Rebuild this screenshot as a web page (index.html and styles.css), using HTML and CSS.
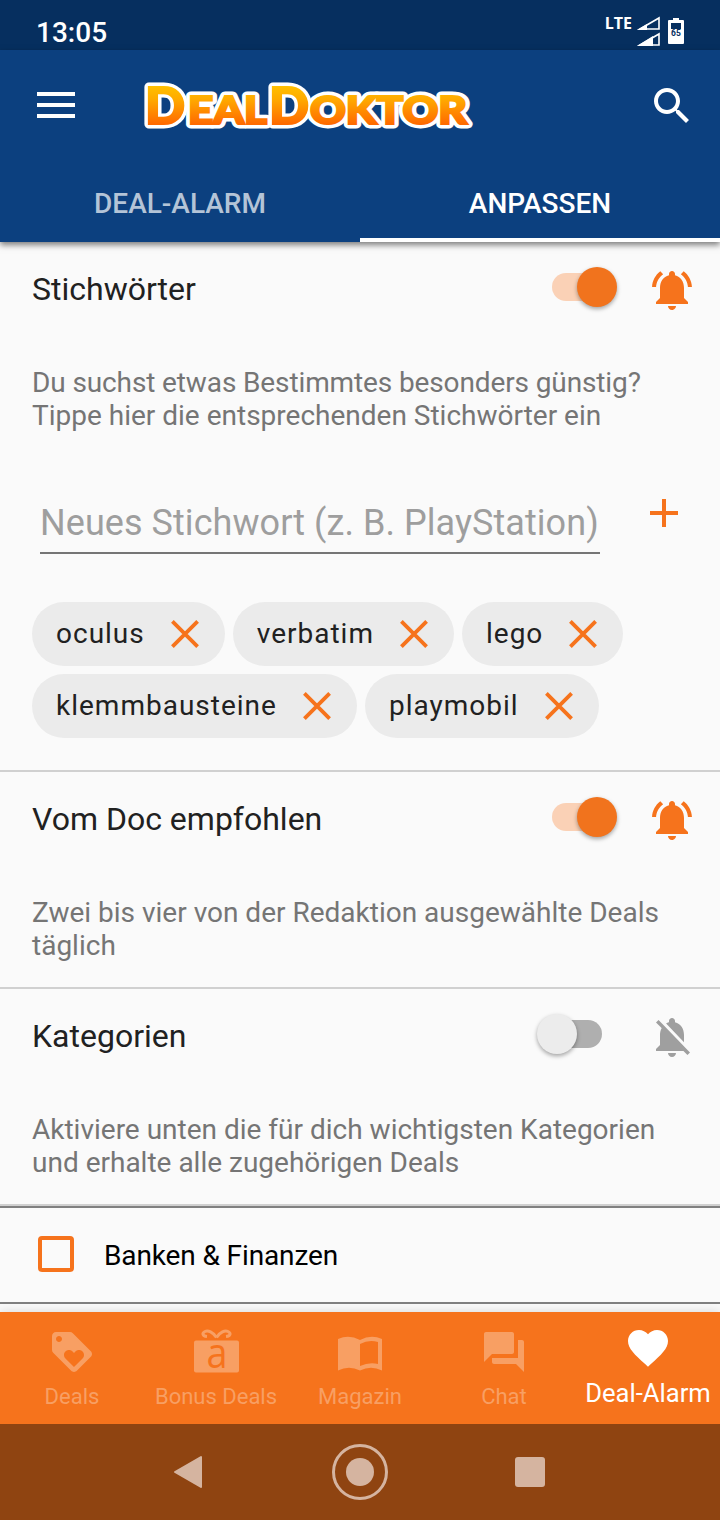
FILE: index.html
```html
<!DOCTYPE html>
<html lang="de">
<head>
    <meta charset="UTF-8">
    <meta name="viewport" content="width=device-width, initial-scale=1.0">
    <title>DealDoktor</title>
    <link rel="stylesheet" href="styles.css">
</head>
<body>
    <!-- shared icons -->
    <svg class="sprite" width="0" height="0">
        <symbol id="bell" viewBox="0 0 24 24"><path d="M7.58 4.08L6.15 2.65C3.75 4.48 2.17 7.3 2.03 10.5h2c.15-2.65 1.51-4.97 3.55-6.42zm12.39 6.42h2c-.15-3.2-1.73-6.02-4.12-7.85l-1.42 1.43c2.02 1.45 3.39 3.77 3.54 6.42zM18 11c0-3.07-1.64-5.64-4.5-6.32V4c0-.83-.67-1.5-1.5-1.5s-1.5.67-1.5 1.5v.68C7.63 5.36 6 7.92 6 11v5l-2 2v1h16v-1l-2-2v-5zm-6 11c.14 0 .27-.01.4-.04.65-.14 1.18-.58 1.44-1.18.1-.24.15-.5.15-.78h-4c.01 1.1.9 2 2.01 2z"/></symbol>
        <symbol id="close" viewBox="0 0 28 28"><path d="M1.4 1.4l25.2 25.2M26.6 1.4L1.4 26.6" fill="none" stroke="currentColor" stroke-width="3.8"/></symbol>
    </svg>

    <div class="status-bar">
        <span class="time">13:05</span>
        <div class="status-icons">
            <span class="lte">LTE</span>
            <svg class="signal" width="24" height="30" viewBox="0 0 24 30">
                <path d="M4 13L23 2V13Z" fill="none" stroke="#fff" stroke-width="1.6"/>
                <path d="M1 14L11 8V14Z"/>
                <path d="M4 29L23 18V29Z" fill="none" stroke="#fff" stroke-width="1.6"/>
                <path d="M1 30L17 20V30Z"/>
            </svg>
            <svg class="battery" width="16" height="26" viewBox="0 0 16 26">
                <path d="M5 0h6v2h4q1 0 1 1v22q0 1-1 1H1q-1 0-1-1V3q0-1 1-1h4z"/>
                <path d="M3 5h10v6H3z" fill="#062f5f"/>
                <text x="8" y="18" text-anchor="middle">65</text>
            </svg>
        </div>
    </div>

    <header>
        <div class="toolbar">
            <svg class="menu" width="38" height="26" viewBox="0 0 38 26"><path d="M0 0h38v4H0zM0 11h38v4H0zM0 22h38v4H0z"/></svg>
            <svg class="logo" width="336" height="56" viewBox="0 0 336 56">
                <defs>
                    <linearGradient id="gold" gradientUnits="userSpaceOnUse" x1="0" y1="8" x2="0" y2="46">
                        <stop offset="0" stop-color="#ffc000"/>
                        <stop offset="0.35" stop-color="#ffaa00"/>
                        <stop offset="1" stop-color="#ff6a00"/>
                    </linearGradient>
                    <text id="logo-text" y="45.5"><tspan class="big" x="4" textLength="40" lengthAdjust="spacingAndGlyphs">D</tspan><tspan class="small" x="47" textLength="79" lengthAdjust="spacingAndGlyphs">EAL</tspan><tspan class="big" x="128" textLength="40" lengthAdjust="spacingAndGlyphs">D</tspan><tspan class="small" x="169" textLength="157" lengthAdjust="spacingAndGlyphs">OKTOR</tspan></text>
                </defs>
                <use href="#logo-text" fill="#fff" stroke="#fff" stroke-width="9" stroke-linejoin="round"/>
                <use href="#logo-text" fill="url(#gold)" stroke="url(#gold)" stroke-width="2.2"/>
            </svg>
            <svg class="search" width="48" height="48" viewBox="0 0 24 24"><path d="M15.500 14h-.79l-.28-.27C15.410 12.590 16 11.110 16 9.500 16 5.910 13.090 3 9.500 3S3 5.910 3 9.500 5.910 16 9.500 16c1.610 0 3.090-.59 4.230-1.570l.27.28v.79l5 4.990L20.490 19l-4.990-5zm-6 0C7.010 14 5 11.990 5 9.500S7.010 5 9.500 5 14 7.010 14 9.500 11.990 14 9.500 14z"/></svg>
        </div>
        <div class="tabs">
            <div class="tab">DEAL-ALARM</div>
            <div class="tab active">ANPASSEN</div>
        </div>
    </header>

    <main>
        <section class="keywords">
            <div class="section-head">
                <h2>Stichwörter</h2>
                <div class="switch on"></div>
                <svg class="bell" width="48" height="48"><use href="#bell"/></svg>
            </div>
            <p><span class="tight">Du suchst etwas Bestimmtes besonders günstig?</span><br>Tippe hier die entsprechenden Stichwörter ein</p>
            <div class="add-row">
                <input type="text" placeholder="Neues Stichwort (z. B. PlayStation)">
                <svg class="plus" width="28" height="28" viewBox="0 0 28 28"><path d="M12 0h4v12h12v4H16v12h-4V16H0v-4h12z"/></svg>
            </div>
            <div class="chips">
                <div class="chip"><span>oculus</span><svg width="28" height="28"><use href="#close"/></svg></div>
                <div class="chip"><span>verbatim</span><svg width="28" height="28"><use href="#close"/></svg></div>
                <div class="chip"><span>lego</span><svg width="28" height="28"><use href="#close"/></svg></div>
                <div class="chip"><span>klemmbausteine</span><svg width="28" height="28"><use href="#close"/></svg></div>
                <div class="chip"><span>playmobil</span><svg width="28" height="28"><use href="#close"/></svg></div>
            </div>
        </section>

        <section class="short">
            <div class="section-head">
                <h2>Vom Doc empfohlen</h2>
                <div class="switch on"></div>
                <svg class="bell" width="48" height="48"><use href="#bell"/></svg>
            </div>
            <p>Zwei bis vier von der Redaktion ausgewählte Deals<br>täglich</p>
        </section>

        <section class="short">
            <div class="section-head">
                <h2>Kategorien</h2>
                <div class="switch"></div>
                <svg class="bell off" width="48" height="48" viewBox="0 0 24 24"><path d="M20 18.690L7.840 6.140 5.270 3.490 4 4.760l2.800 2.800v.01c-.52.99-.8 2.160-.8 3.420v5l-2 2v1h13.730l2 2L21 19.720l-1-1.030zM12 22c1.110 0 2-.89 2-2h-4c0 1.110.89 2 2 2zm6-7.320V11c0-3.080-1.640-5.640-4.500-6.320V4c0-.83-.67-1.500-1.500-1.500s-1.500.67-1.500 1.500v.68c-.15.03-.29.08-.42.12-.1.03-.2.07-.3.11h-.01c-.01 0-.01 0-.02.01-.23.09-.46.2-.68.31 0 0-.01 0-.01.01L18 14.680z"/></svg>
            </div>
            <p>Aktiviere unten die für dich wichtigsten Kategorien<br>und erhalte alle zugehörigen Deals</p>
        </section>

        <div class="category">
            <span class="checkbox"></span>
            <span class="tight">Banken &amp; Finanzen</span>
        </div>
    </main>

    <nav class="bottom-nav">
        <div class="nav-item">
            <svg width="48" height="48" viewBox="0 0 24 24"><path d="M21.410 11.580l-9-9C12.050 2.220 11.550 2 11 2H4c-1.100 0-2 .9-2 2v7c0 .55.22 1.050.59 1.420l9 9c.36.36.86.58 1.410.58s1.050-.22 1.410-.59l7-7c.37-.36.59-.86.59-1.410s-.23-1.060-.59-1.420zM5.500 7C4.670 7 4 6.330 4 5.500S4.670 4 5.500 4 7 4.670 7 5.500 6.330 7 5.500 7zm11.770 8.270L13 19.540l-4.270-4.270C8.280 14.810 8 14.190 8 13.500c0-1.380 1.120-2.500 2.500-2.500.69 0 1.320.28 1.770.74l.73.72.73-.73c.45-.45 1.080-.73 1.770-.73 1.380 0 2.500 1.120 2.500 2.500 0 .69-.28 1.320-.73 1.770z"/></svg>
            <span>Deals</span>
        </div>
        <div class="nav-item">
            <svg class="gift" width="48" height="48" viewBox="0 0 48 48">
                <rect x="2" y="12.500" width="45" height="32" rx="2"/>
                <path d="M24.500 9.500C21 4 16 2 13 3.500S10 8 15 8.500M24.500 9.500C28 4 33 2 36 3.500S39 8 34 8.500" fill="none" stroke="#f89f63" stroke-width="3"/>
                <text x="14.500" y="40" textLength="21" lengthAdjust="spacingAndGlyphs">a</text>
            </svg>
            <span>Bonus Deals</span>
        </div>
        <div class="nav-item">
            <svg width="48" height="48" viewBox="0 0 48 48"><path fill-rule="evenodd" d="M2 11Q13 6 24 12Q35 6 46 11V42.500Q35 37 24 42.500Q13 37 2 42.500ZM24 16V38Q33 34 42 36V14Q33 11 24 16Z"/></svg>
            <span>Magazin</span>
        </div>
        <div class="nav-item">
            <svg width="48" height="48" viewBox="0 0 24 24"><path d="M21 6h-2v9H6v2c0 .55.45 1 1 1h11l4 4V7c0-.55-.45-1-1-1zm-4 6V3c0-.55-.45-1-1-1H3c-.55 0-1 .45-1 1v14l4-4h10c.55 0 1-.45 1-1z"/></svg>
            <span>Chat</span>
        </div>
        <div class="nav-item active">
            <svg width="48" height="48" viewBox="0 0 24 24"><path d="M12 21.350l-1.450-1.320C5.400 15.360 2 12.280 2 8.500 2 5.420 4.420 3 7.500 3c1.740 0 3.410.81 4.500 2.090C13.090 3.810 14.760 3 16.500 3 19.580 3 22 5.420 22 8.500c0 3.780-3.400 6.860-8.550 11.540L12 21.350z"/></svg>
            <span>Deal-Alarm</span>
        </div>
    </nav>

    <div class="system-nav">
        <svg width="56" height="56" viewBox="0 0 56 56"><path d="M13 28L39 13V43Z" stroke="#d5b4a0" stroke-width="2" stroke-linejoin="round"/></svg>
        <svg width="56" height="56" viewBox="0 0 56 56"><circle cx="28" cy="28" r="26.500" fill="none" stroke="#d5b4a0" stroke-width="3"/><circle cx="28" cy="28" r="14"/></svg>
        <svg width="56" height="56" viewBox="0 0 56 56"><rect x="13" y="13" width="30" height="30" rx="3"/></svg>
    </div>
</body>
</html>
```
FILE: styles.css
```css
* {
    box-sizing: border-box;
}
body {
    margin: 0;
    width: 720px;
    height: 1520px;
    display: flex;
    flex-direction: column;
    overflow: hidden;
    font-family: Roboto, sans-serif;
    background-color: #fafafa;
    color: #212121;
}
svg {
    display: block;
    flex-shrink: 0;
    fill: currentColor;
}
.sprite {
    display: none;
}
.status-bar {
    height: 50px;
    padding: 15px 36px 0 36px;
    display: flex;
    justify-content: space-between;
    background-color: #062f5f;
    color: white;
}
.time {
    font-size: 28px;
    font-weight: 500;
    line-height: 35px;
}
.status-icons {
    display: flex;
    align-items: flex-start;
}
.lte {
    font: 700 16px/17px "Open Sans", sans-serif;
    margin-right: 4px;
}
.signal {
    margin: 1px 8px 0 0;
}
.battery {
    margin-top: 3px;
}
.battery text {
    font: 700 8.5px Roboto, sans-serif;
    fill: #062f5f;
}
header {
    height: 192px;
    background-color: #0c407f;
    color: white;
    box-shadow: 0 3px 6px rgba(0, 0, 0, 0.5);
    z-index: 1;
}
.toolbar {
    height: 112px;
    padding: 0 24px 0 37px;
    display: flex;
    align-items: center;
}
.menu {
    margin-bottom: 2px;
}
.logo {
    margin-left: 66px;
}
.logo text {
    font-family: Lato, sans-serif;
    font-weight: 900;
}
.logo .big {
    font-size: 52px;
}
.logo .small {
    font-size: 37px;
}
.search {
    margin-left: auto;
}
.tabs {
    display: flex;
}
.tab {
    flex: 1;
    height: 80px;
    line-height: 84px;
    text-align: center;
    font-size: 28px;
    font-weight: 500;
    color: #b4c4d7;
}
.tab.active {
    color: white;
    border-bottom: 4px solid white;
}
main {
    flex: 1;
    overflow: hidden;
}
section {
    border-bottom: 2px solid #d0d0d0;
}
.keywords {
    height: 530px;
}
.short {
    height: 217px;
}
.section-head {
    height: 94px;
    padding: 0 24px 0 32px;
    display: flex;
    align-items: center;
}
h2 {
    margin: 0;
    flex: 1;
    font-size: 32px;
    font-weight: 400;
}
.switch {
    position: relative;
    width: 50px;
    height: 28px;
    margin: 0 46px 4px 0;
    border-radius: 14px;
    background-color: #afafaf;
}
.switch::after {
    content: "";
    position: absolute;
    top: -6px;
    left: -15px;
    width: 40px;
    height: 40px;
    border-radius: 50%;
    background-color: #ececec;
    box-shadow: 0 2px 4px rgba(0, 0, 0, 0.35);
}
.switch.on {
    background-color: #fad1b6;
}
.switch.on::after {
    left: 25px;
    background-color: #f1731d;
}
.bell {
    margin-top: 2px;
    color: #f6731c;
}
.bell.off {
    color: #9f9f9f;
}
p {
    margin: 0;
    padding: 30px 32px 0;
    font-size: 28px;
    line-height: 33px;
    color: #757575;
}
.tight {
    letter-spacing: -0.12px;
}
.add-row {
    display: flex;
    margin: 60px 0 48px 40px;
}
input {
    width: 560px;
    height: 62px;
    padding: 2px 0 0;
    border: none;
    border-bottom: 2px solid #757575;
    background: none;
    font-family: Roboto, sans-serif;
    font-size: 36px;
    letter-spacing: 0.06px;
}
input::placeholder {
    color: #9e9e9e;
}
.plus {
    margin: 7px 0 0 50px;
    color: #f6731c;
}
.chips {
    display: flex;
    flex-wrap: wrap;
    gap: 8px;
    padding: 0 80px 0 32px;
}
.chip {
    height: 64px;
    padding: 0 26px 0 24px;
    display: flex;
    align-items: center;
    border-radius: 32px;
    background-color: #ebebeb;
    font-size: 28px;
    letter-spacing: 1px;
}
.chip span {
    padding-bottom: 2px;
}
.chip svg {
    margin-left: 26px;
    color: #f6731c;
}
.category {
    height: 98px;
    padding: 0 38px;
    display: flex;
    align-items: center;
    gap: 30px;
    border-top: 2px solid #808080;
    border-bottom: 2px solid #808080;
    font-size: 28px;
    color: black;
}
.checkbox {
    width: 36px;
    height: 36px;
    margin-bottom: 2px;
    border: 4px solid #f6731c;
    border-radius: 4px;
}
.bottom-nav {
    height: 112px;
    display: flex;
    background-color: #f6731c;
    box-shadow: 0 0 10px rgba(0, 0, 0, 0.15);
    color: #f89f63;
}
.nav-item {
    width: 144px;
    padding-top: 16px;
    display: flex;
    flex-direction: column;
    align-items: center;
    font-size: 22px;
    line-height: 41px;
    white-space: nowrap;
}
.gift {
    overflow: visible;
}
.nav-item text {
    font: 500 42px "Open Sans", sans-serif;
    fill: #f6731c;
}
.nav-item.active {
    padding-top: 12px;
    color: white;
    font-size: 25.6px;
    line-height: 43px;
}
.system-nav {
    height: 96px;
    display: flex;
    justify-content: center;
    align-items: center;
    gap: 114px;
    background-color: #8f4411;
    color: #d5b4a0;
}
```
